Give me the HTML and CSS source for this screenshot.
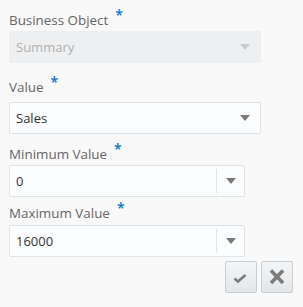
FILE: index.html
```html
<!DOCTYPE html>
<html lang="en">
<head>
    <meta charset="UTF-8">
    <meta name="viewport" content="width=device-width, initial-scale=1.0">
    <title>Range Filter</title>
    <link rel="stylesheet" href="styles.css">
</head>
<body>
    <div class="form">
        <div class="field field-object">
            <label class="label">Business Object<span class="required">*</span></label>
            <div class="select disabled">
                <span class="select-text">Summary</span>
                <span class="arrow"></span>
            </div>
        </div>
        <div class="field field-value">
            <label class="label">Value<span class="required">*</span></label>
            <div class="select">
                <span class="select-text">Sales</span>
                <span class="arrow"></span>
            </div>
        </div>
        <div class="field field-min">
            <label class="label">Minimum Value<span class="required">*</span></label>
            <div class="combo">
                <span class="combo-text">0</span>
                <span class="combo-btn"><span class="arrow"></span></span>
            </div>
        </div>
        <div class="field field-max">
            <label class="label">Maximum Value<span class="required">*</span></label>
            <div class="combo">
                <span class="combo-text">16000</span>
                <span class="combo-btn"><span class="arrow"></span></span>
            </div>
        </div>
        <div class="actions">
            <button class="icon-btn" title="Apply">
                <svg width="16" height="16" viewBox="0 0 16 16">
                    <path d="M1.5 9.5 L5 12.5 L12.5 6" fill="none" stroke="#7b7b7b" stroke-width="2.6"/>
                </svg>
            </button>
            <button class="icon-btn" title="Cancel">
                <svg width="16" height="16" viewBox="0 0 16 16">
                    <path d="M2 1.5 L14 14 M14 1.5 L2 14" fill="none" stroke="#7b7b7b" stroke-width="3.6"/>
                </svg>
            </button>
        </div>
    </div>
</body>
</html>
```

FILE: styles.css
```css
body {
    margin: 0;
    background-color: #f9f9f9;
    font-family: "Open Sans", "Noto Sans", sans-serif;
}

.form {
    padding: 11px 10px 0 9px;
}

.label {
    display: block;
    height: 18px;
    line-height: 18px;
    font-size: 13.4px;
    color: #666666;
}

.required {
    position: relative;
    top: -5px;
    margin-left: 7px;
    color: #0572ce;
    font-size: 14px;
    font-weight: 600;
}

.field-object .label {
    margin-bottom: 2px;
}

.field-value {
    margin-top: 15px;
}

.field-value .label {
    margin-bottom: 6px;
}

.field-min {
    margin-top: 11px;
}

.field-min .label {
    margin-bottom: 2px;
}

.field-max {
    margin-top: 7px;
}

.field-max .label {
    margin-bottom: 3px;
}

.select,
.combo {
    display: flex;
    align-items: center;
    box-sizing: border-box;
    height: 32px;
    background-color: #fcfdfe;
    border: 1px solid #dfe4e7;
    border-radius: 2px;
    font-size: 13px;
    color: #333333;
}

.select {
    width: 252px;
    padding: 0 10px 0 6px;
}

.select-text {
    flex: 1;
}

.select.disabled {
    background-color: #eeeff0;
    border-color: #eeeff0;
    color: #b1b1b1;
}

.select.disabled .arrow {
    border-top-color: #c9cacb;
}

.combo {
    width: 236px;
}

.combo-text {
    flex: 1;
    padding-left: 6px;
}

.combo-btn {
    display: flex;
    align-items: center;
    justify-content: center;
    width: 27px;
    height: 24px;
    border-left: 1px solid #dfe4e7;
}

.arrow {
    width: 0;
    height: 0;
    border-left: 5px solid transparent;
    border-right: 5px solid transparent;
    border-top: 6px solid #7a7a7a;
}

.actions {
    display: flex;
    justify-content: flex-end;
    gap: 4px;
    margin-top: 4px;
}

.icon-btn {
    display: flex;
    align-items: center;
    justify-content: center;
    width: 32px;
    height: 32px;
    padding: 0;
    border: 1px solid #c4ced7;
    border-radius: 2px;
    background: linear-gradient(#f4f5f6, #e3e6e8);
    cursor: pointer;
}
```
